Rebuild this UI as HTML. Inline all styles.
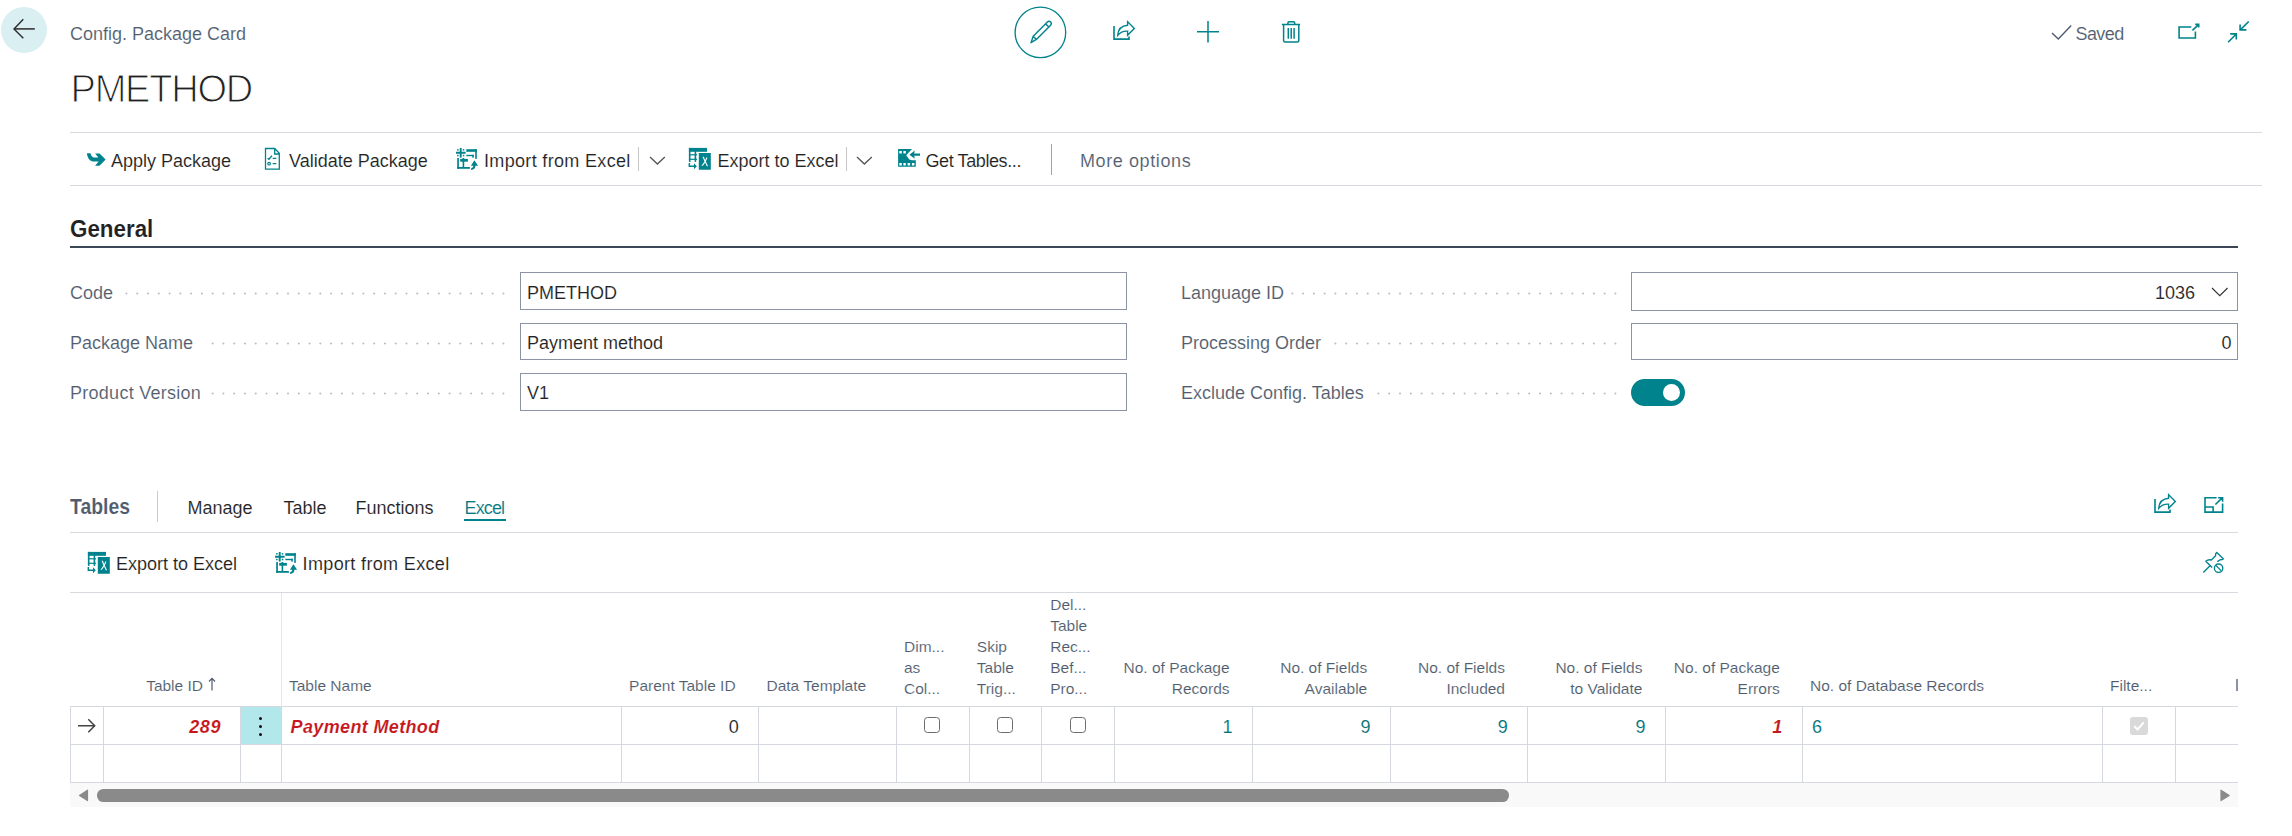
<!DOCTYPE html>
<html><head><meta charset="utf-8">
<style>
html,body{margin:0;padding:0;background:#fff;width:2292px;height:836px;overflow:hidden;}
body{position:relative;font-family:"Liberation Sans",sans-serif;}
.t{position:absolute;white-space:nowrap;line-height:1;font-size:18px;color:#212121;-webkit-text-stroke:0.12px #fff;}
.cap{color:#505c6d;}
.teal{color:#00838c;}
.red{color:#c4161c;font-weight:bold;font-style:italic;}
.hl{position:absolute;height:1px;background:#d5d8dd;}
.vl{position:absolute;width:1px;background:#d5d8dd;}
svg{position:absolute;overflow:visible;}
.box{position:absolute;border:1px solid #8a94a4;box-sizing:border-box;background:#fff;}
.dots{position:absolute;height:2px;background-image:radial-gradient(circle,#a9afb8 0.9px,transparent 1.1px);background-size:10.77px 2px;background-repeat:repeat-x;background-position:right center;}
.th{position:absolute;white-space:nowrap;line-height:21px;font-size:15.6px;color:#505c6d;}
.cb{position:absolute;width:14px;height:14px;border:1.2px solid #555;border-radius:3px;background:#fff;}
</style></head><body>

<!-- back button -->
<div style="position:absolute;left:1px;top:7px;width:46px;height:46px;border-radius:50%;background:#d9eff2;"></div>
<svg style="left:0;top:0" width="48" height="60"><path d="M14.5 28.9 H34.8" stroke="#4a4a4a" stroke-width="1.8" fill="none"/><path d="M23.3 19.3 L14 28.9 L23.3 38.3" stroke="#2a2a2a" stroke-width="1.4" fill="none"/></svg>

<div class="t cap" style="left:70px;top:24.7px;">Config. Package Card</div>
<div class="t" style="left:70.5px;top:69.8px;font-size:38px;letter-spacing:-1.2px;-webkit-text-stroke:1.1px #fff;">PMETHOD</div>



<!-- header action icons -->
<svg style="left:1014px;top:6px" width="53" height="53" viewBox="0 0 53 53"><circle cx="26.4" cy="26.4" r="25.3" stroke="#00838c" stroke-width="1.3" fill="none"/>
<path d="M17 36.7 L19.2 30.2 L33.4 16 Q35 14.4 36.6 16 Q38.2 17.6 36.6 19.2 L22.4 33.4 Z M19.2 30.2 L22.4 33.4 M31.6 17.8 L34.8 21" stroke="#00838c" stroke-width="1.4" fill="none" stroke-linejoin="round"/></svg>
<svg style="left:1107px;top:15.1px" width="30" height="28" viewBox="0 0 30 28"><g stroke="#00838c" stroke-width="1.6" fill="none"><path d="M7 11.1 V24.1 H22 V21.5"/><path d="M10.7 20.3 Q11.5 10.8 20.6 10.2 V6.6 L27.3 13.4 L20.6 20.3 V16.2 Q14.5 15.8 10.7 20.3 Z" stroke-width="1.4"/></g></svg>
<svg style="left:1196px;top:20px" width="24" height="24" viewBox="0 0 24 24"><path d="M12 1 V22.5 M1 11.8 H23" stroke="#00838c" stroke-width="1.5" fill="none"/></svg>
<svg style="left:1274px;top:14px" width="34" height="34" viewBox="0 0 34 34"><path d="M7.9 10.4 H26 M13.9 10.4 V8.9 Q13.9 7.8 15 7.8 H19.6 Q20.7 7.8 20.7 8.9 V10.4 M9.6 10.4 V26.6 Q9.6 28.1 11.1 28.1 H23.3 Q24.8 28.1 24.8 26.6 V10.4 M14.3 14 V24.8 M17.2 14 V24.8 M20.1 14 V24.8" stroke="#00838c" stroke-width="1.5" fill="none"/></svg>

<!-- saved / top right -->
<svg style="left:2050px;top:22px" width="24" height="20" viewBox="0 0 24 20"><path d="M2 11 L8.3 17 L21.2 3.5" stroke="#505c6d" stroke-width="1.4" fill="none"/></svg>
<div class="t cap" style="left:2075.5px;top:24.8px;letter-spacing:-0.6px;">Saved</div>
<svg style="left:2170px;top:14px" width="86" height="34" viewBox="0 0 86 34"><g stroke="#00838c" stroke-width="1.6" fill="none"><path d="M21.3 13 H9.1 V24 H25.4 V17.5 M22.4 16.3 L28.3 10.8 M25.2 10.4 H28.7 V13.6"/><path d="M78.7 7.5 L70.6 15.6 M70.1 10.4 V15.9 H76.4 M58.1 28.3 L66 20.2 M60.2 19.9 H66.3 V25.4"/></g></svg>

<!-- action bar -->
<div class="hl" style="left:70px;top:132px;width:2192px;background:#d6d9de;"></div>
<div class="hl" style="left:70px;top:185px;width:2192px;background:#d6d9de;"></div>
<svg style="left:82px;top:148px" width="30" height="24" viewBox="0 0 30 24"><path d="M4.9 5.2 L8.4 5.2 Q9.2 8.8 11.5 9.6 L16.4 9.6 L13.1 5.4 L17.5 5.4 L23.6 11.6 L17.5 17.8 L13.1 17.8 L16.6 13.5 L10.6 13.5 Q5.6 12.2 4.9 5.2 Z" fill="#00838c"/></svg>
<div class="t" style="left:111px;top:151.8px;">Apply Package</div>
<svg style="left:258px;top:144px" width="30" height="30" viewBox="0 0 30 30"><g stroke="#00838c" fill="none"><path d="M7.5 4.5 H16.7 L21.3 9.3 V25.1 H7.5 Z M16.7 4.5 V10 H21.3" stroke-width="1.3"/><path d="M9.6 14.3 L10.9 15.3 L14 11.6 M14.7 14.4 H18.3 M14.7 19.6 H18.3" stroke-width="1.4"/><circle cx="11.1" cy="19.7" r="1.3" stroke-width="1.2"/></g></svg>
<div class="t" style="left:289px;top:151.8px;">Validate Package</div>

<svg style="left:450px;top:142px" width="40" height="34" viewBox="0 0 40 34"><g fill="#00838c">
<rect x="6" y="9.75" width="9.6" height="2"/><rect x="9.75" y="6" width="1.9" height="9.6"/>
<rect x="7.1" y="7.1" width="1.5" height="1.5"/><rect x="12.8" y="7.1" width="1.5" height="1.5"/><rect x="7.1" y="12.8" width="1.5" height="1.5"/><rect x="12.8" y="12.8" width="1.5" height="1.5"/>
<rect x="16.3" y="7.2" width="10.5" height="2.6"/><rect x="25.2" y="7.2" width="1.6" height="9.7"/>
<rect x="16.3" y="12.8" width="7.5" height="1.4"/><rect x="22.2" y="12.8" width="1.6" height="2.8"/>
<rect x="7.2" y="16" width="1.7" height="10.8"/><rect x="7.2" y="25" width="12.7" height="1.8"/>
<rect x="10.2" y="16.9" width="7.7" height="2.8"/><rect x="12.6" y="16" width="1.6" height="9.5"/>
<path d="M24.4 18.2 L28.1 23.8 L25.4 23.8 Q25.4 27.8 21.1 28 L21.1 26.2 Q23.4 25.8 23.4 23.8 L20.9 23.8 Z"/>
</g></svg>
<div class="t " style="left:484px;top:151.76px;font-size:18px;letter-spacing:0.33px;">Import from Excel</div>
<div class="vl" style="left:638px;top:147px;height:24px;background:#c6c6c6;"></div>
<svg style="left:648.5px;top:155.8px" width="16.8" height="9.0" viewBox="-1 -1 16.8 9.0"><path d="M0 0 L7.4 7.0 L14.8 0" stroke="#555" stroke-width="1.3" fill="none"/></svg>
<svg style="left:684px;top:142px" width="40" height="34" viewBox="0 0 40 34"><g fill="#00838c">
<rect x="4.9" y="5.9" width="18.1" height="3.9"/><rect x="4.9" y="5.9" width="1.6" height="14"/>
<rect x="10.6" y="9" width="1.6" height="10.9"/><rect x="4.9" y="12.2" width="8.1" height="1.2"/><rect x="4.9" y="16.7" width="8.1" height="1.2"/>
<path d="M14.8 11 H26.8 V27.8 H14.8 Z M18.6 14.8 L20.5 19.4 L17.5 23.8 H18.9 L21.1 20.6 L22.8 24.2 H24.1 L21.8 19.4 L23.5 15.4 H22.3 L21.1 18.3 L19.9 14.8 Z" fill-rule="evenodd"/>
<path d="M4.6 21.1 H6.1 V23.5 H10 V21.3 L12.8 24.2 L10 27.2 V25 H4.6 Z"/>
</g></svg>
<div class="t " style="left:717.5px;top:151.76px;font-size:18px;">Export to Excel</div>
<div class="vl" style="left:846px;top:147px;height:24px;background:#c6c6c6;"></div>
<svg style="left:855.7px;top:155.8px" width="16.8" height="9.0" viewBox="-1 -1 16.8 9.0"><path d="M0 0 L7.4 7.0 L14.8 0" stroke="#555" stroke-width="1.3" fill="none"/></svg>
<svg style="left:892px;top:142px" width="40" height="34" viewBox="0 0 40 34"><g fill="#00838c">
<path d="M6.1 7.1 H20 L17 10.3 L14.2 13.3 L17.3 17.6 L20 18.3 H23.8 V24.8 H6.1 Z M7.3 8.9 V11.4 H9.8 V8.9 Z M11.4 8.9 V11.4 H13.8 V8.9 Z M7.3 21.1 V23.6 H9.8 V21.1 Z M11.4 21.1 V23.6 H13.8 V21.1 Z M15.6 21.1 V23.6 H18.1 V21.1 Z M19.9 21.1 V23.6 H22.4 V21.1 Z" fill-rule="evenodd"/>
<path d="M17.4 12.7 L22.8 8.6 L22.2 11.6 H28 V13.8 H22.2 L22.8 16.8 Z"/>
</g></svg>
<div class="t " style="left:925.5px;top:151.76px;font-size:18px;letter-spacing:-0.4px;">Get Tables...</div>
<div class="vl" style="left:1051px;top:144px;height:31px;background:#9aa3ae;"></div>
<div class="t cap" style="left:1080px;top:151.76px;font-size:18px;letter-spacing:0.6px;">More options</div>
<div class="t " style="left:70px;top:216.51px;font-size:24.2px;font-weight:bold;transform:scaleX(0.925);transform-origin:0 0;">General</div>
<div style="position:absolute;left:70px;top:246px;width:2168px;height:2px;background:#3b4757;"></div>
<div class="t cap" style="left:70px;top:283.56px;font-size:18px;letter-spacing:0px;">Code</div>
<svg style="left:119.00px;top:290.50px" width="391.8" height="5" fill="#b9bec6"><circle cx="384.42" cy="2.5" r="1.05"/><circle cx="373.65" cy="2.5" r="1.05"/><circle cx="362.88" cy="2.5" r="1.05"/><circle cx="352.11" cy="2.5" r="1.05"/><circle cx="341.34" cy="2.5" r="1.05"/><circle cx="330.57" cy="2.5" r="1.05"/><circle cx="319.80" cy="2.5" r="1.05"/><circle cx="309.03" cy="2.5" r="1.05"/><circle cx="298.25" cy="2.5" r="1.05"/><circle cx="287.49" cy="2.5" r="1.05"/><circle cx="276.72" cy="2.5" r="1.05"/><circle cx="265.95" cy="2.5" r="1.05"/><circle cx="255.18" cy="2.5" r="1.05"/><circle cx="244.41" cy="2.5" r="1.05"/><circle cx="233.63" cy="2.5" r="1.05"/><circle cx="222.87" cy="2.5" r="1.05"/><circle cx="212.10" cy="2.5" r="1.05"/><circle cx="201.33" cy="2.5" r="1.05"/><circle cx="190.56" cy="2.5" r="1.05"/><circle cx="179.79" cy="2.5" r="1.05"/><circle cx="169.02" cy="2.5" r="1.05"/><circle cx="158.25" cy="2.5" r="1.05"/><circle cx="147.48" cy="2.5" r="1.05"/><circle cx="136.71" cy="2.5" r="1.05"/><circle cx="125.94" cy="2.5" r="1.05"/><circle cx="115.17" cy="2.5" r="1.05"/><circle cx="104.40" cy="2.5" r="1.05"/><circle cx="93.63" cy="2.5" r="1.05"/><circle cx="82.86" cy="2.5" r="1.05"/><circle cx="72.09" cy="2.5" r="1.05"/><circle cx="61.32" cy="2.5" r="1.05"/><circle cx="50.55" cy="2.5" r="1.05"/><circle cx="39.78" cy="2.5" r="1.05"/><circle cx="29.01" cy="2.5" r="1.05"/><circle cx="18.24" cy="2.5" r="1.05"/><circle cx="7.47" cy="2.5" r="1.05"/></svg>
<div class="t cap" style="left:70px;top:334.06px;font-size:18px;letter-spacing:0px;">Package Name</div>
<svg style="left:205.00px;top:341.00px" width="305.8" height="5" fill="#b9bec6"><circle cx="298.42" cy="2.5" r="1.05"/><circle cx="287.65" cy="2.5" r="1.05"/><circle cx="276.88" cy="2.5" r="1.05"/><circle cx="266.11" cy="2.5" r="1.05"/><circle cx="255.34" cy="2.5" r="1.05"/><circle cx="244.57" cy="2.5" r="1.05"/><circle cx="233.80" cy="2.5" r="1.05"/><circle cx="223.03" cy="2.5" r="1.05"/><circle cx="212.25" cy="2.5" r="1.05"/><circle cx="201.49" cy="2.5" r="1.05"/><circle cx="190.72" cy="2.5" r="1.05"/><circle cx="179.95" cy="2.5" r="1.05"/><circle cx="169.18" cy="2.5" r="1.05"/><circle cx="158.41" cy="2.5" r="1.05"/><circle cx="147.63" cy="2.5" r="1.05"/><circle cx="136.87" cy="2.5" r="1.05"/><circle cx="126.10" cy="2.5" r="1.05"/><circle cx="115.33" cy="2.5" r="1.05"/><circle cx="104.56" cy="2.5" r="1.05"/><circle cx="93.79" cy="2.5" r="1.05"/><circle cx="83.02" cy="2.5" r="1.05"/><circle cx="72.25" cy="2.5" r="1.05"/><circle cx="61.48" cy="2.5" r="1.05"/><circle cx="50.71" cy="2.5" r="1.05"/><circle cx="39.94" cy="2.5" r="1.05"/><circle cx="29.17" cy="2.5" r="1.05"/><circle cx="18.40" cy="2.5" r="1.05"/><circle cx="7.63" cy="2.5" r="1.05"/></svg>
<div class="t cap" style="left:70px;top:384.46px;font-size:18px;letter-spacing:0.27px;">Product Version</div>
<svg style="left:207.00px;top:391.40px" width="303.8" height="5" fill="#b9bec6"><circle cx="296.42" cy="2.5" r="1.05"/><circle cx="285.65" cy="2.5" r="1.05"/><circle cx="274.88" cy="2.5" r="1.05"/><circle cx="264.11" cy="2.5" r="1.05"/><circle cx="253.34" cy="2.5" r="1.05"/><circle cx="242.57" cy="2.5" r="1.05"/><circle cx="231.80" cy="2.5" r="1.05"/><circle cx="221.03" cy="2.5" r="1.05"/><circle cx="210.25" cy="2.5" r="1.05"/><circle cx="199.49" cy="2.5" r="1.05"/><circle cx="188.72" cy="2.5" r="1.05"/><circle cx="177.95" cy="2.5" r="1.05"/><circle cx="167.18" cy="2.5" r="1.05"/><circle cx="156.41" cy="2.5" r="1.05"/><circle cx="145.63" cy="2.5" r="1.05"/><circle cx="134.87" cy="2.5" r="1.05"/><circle cx="124.10" cy="2.5" r="1.05"/><circle cx="113.33" cy="2.5" r="1.05"/><circle cx="102.56" cy="2.5" r="1.05"/><circle cx="91.79" cy="2.5" r="1.05"/><circle cx="81.02" cy="2.5" r="1.05"/><circle cx="70.25" cy="2.5" r="1.05"/><circle cx="59.48" cy="2.5" r="1.05"/><circle cx="48.71" cy="2.5" r="1.05"/><circle cx="37.94" cy="2.5" r="1.05"/><circle cx="27.17" cy="2.5" r="1.05"/><circle cx="16.40" cy="2.5" r="1.05"/><circle cx="5.63" cy="2.5" r="1.05"/></svg>
<div class="box" style="left:520px;top:272px;width:607px;height:38px;"></div>
<div class="t " style="left:527px;top:283.56px;font-size:18px;">PMETHOD</div>
<div class="box" style="left:520px;top:323px;width:607px;height:37px;"></div>
<div class="t " style="left:527px;top:334.06px;font-size:18px;">Payment method</div>
<div class="box" style="left:520px;top:373px;width:607px;height:38px;"></div>
<div class="t " style="left:527px;top:384.46px;font-size:18px;">V1</div>
<div class="t cap" style="left:1181px;top:283.56px;font-size:18px;letter-spacing:0px;">Language ID</div>
<svg style="left:1290.00px;top:290.50px" width="332.8" height="5" fill="#b9bec6"><circle cx="325.41" cy="2.5" r="1.05"/><circle cx="314.64" cy="2.5" r="1.05"/><circle cx="303.88" cy="2.5" r="1.05"/><circle cx="293.11" cy="2.5" r="1.05"/><circle cx="282.34" cy="2.5" r="1.05"/><circle cx="271.57" cy="2.5" r="1.05"/><circle cx="260.80" cy="2.5" r="1.05"/><circle cx="250.02" cy="2.5" r="1.05"/><circle cx="239.25" cy="2.5" r="1.05"/><circle cx="228.48" cy="2.5" r="1.05"/><circle cx="217.71" cy="2.5" r="1.05"/><circle cx="206.94" cy="2.5" r="1.05"/><circle cx="196.17" cy="2.5" r="1.05"/><circle cx="185.40" cy="2.5" r="1.05"/><circle cx="174.63" cy="2.5" r="1.05"/><circle cx="163.87" cy="2.5" r="1.05"/><circle cx="153.10" cy="2.5" r="1.05"/><circle cx="142.33" cy="2.5" r="1.05"/><circle cx="131.56" cy="2.5" r="1.05"/><circle cx="120.78" cy="2.5" r="1.05"/><circle cx="110.01" cy="2.5" r="1.05"/><circle cx="99.24" cy="2.5" r="1.05"/><circle cx="88.47" cy="2.5" r="1.05"/><circle cx="77.70" cy="2.5" r="1.05"/><circle cx="66.93" cy="2.5" r="1.05"/><circle cx="56.16" cy="2.5" r="1.05"/><circle cx="45.39" cy="2.5" r="1.05"/><circle cx="34.62" cy="2.5" r="1.05"/><circle cx="23.86" cy="2.5" r="1.05"/><circle cx="13.09" cy="2.5" r="1.05"/><circle cx="2.32" cy="2.5" r="1.05"/></svg>
<div class="t cap" style="left:1181px;top:334.06px;font-size:18px;letter-spacing:0px;">Processing Order</div>
<svg style="left:1327.00px;top:341.00px" width="295.8" height="5" fill="#b9bec6"><circle cx="288.41" cy="2.5" r="1.05"/><circle cx="277.64" cy="2.5" r="1.05"/><circle cx="266.88" cy="2.5" r="1.05"/><circle cx="256.11" cy="2.5" r="1.05"/><circle cx="245.34" cy="2.5" r="1.05"/><circle cx="234.57" cy="2.5" r="1.05"/><circle cx="223.80" cy="2.5" r="1.05"/><circle cx="213.02" cy="2.5" r="1.05"/><circle cx="202.25" cy="2.5" r="1.05"/><circle cx="191.48" cy="2.5" r="1.05"/><circle cx="180.71" cy="2.5" r="1.05"/><circle cx="169.94" cy="2.5" r="1.05"/><circle cx="159.17" cy="2.5" r="1.05"/><circle cx="148.40" cy="2.5" r="1.05"/><circle cx="137.63" cy="2.5" r="1.05"/><circle cx="126.87" cy="2.5" r="1.05"/><circle cx="116.10" cy="2.5" r="1.05"/><circle cx="105.33" cy="2.5" r="1.05"/><circle cx="94.56" cy="2.5" r="1.05"/><circle cx="83.78" cy="2.5" r="1.05"/><circle cx="73.01" cy="2.5" r="1.05"/><circle cx="62.24" cy="2.5" r="1.05"/><circle cx="51.47" cy="2.5" r="1.05"/><circle cx="40.70" cy="2.5" r="1.05"/><circle cx="29.93" cy="2.5" r="1.05"/><circle cx="19.16" cy="2.5" r="1.05"/><circle cx="8.39" cy="2.5" r="1.05"/></svg>
<div class="t cap" style="left:1181px;top:384.46px;font-size:18px;letter-spacing:0px;">Exclude Config. Tables</div>
<svg style="left:1370.00px;top:391.40px" width="252.8" height="5" fill="#b9bec6"><circle cx="245.41" cy="2.5" r="1.05"/><circle cx="234.64" cy="2.5" r="1.05"/><circle cx="223.88" cy="2.5" r="1.05"/><circle cx="213.11" cy="2.5" r="1.05"/><circle cx="202.34" cy="2.5" r="1.05"/><circle cx="191.57" cy="2.5" r="1.05"/><circle cx="180.80" cy="2.5" r="1.05"/><circle cx="170.02" cy="2.5" r="1.05"/><circle cx="159.25" cy="2.5" r="1.05"/><circle cx="148.48" cy="2.5" r="1.05"/><circle cx="137.71" cy="2.5" r="1.05"/><circle cx="126.94" cy="2.5" r="1.05"/><circle cx="116.17" cy="2.5" r="1.05"/><circle cx="105.40" cy="2.5" r="1.05"/><circle cx="94.63" cy="2.5" r="1.05"/><circle cx="83.87" cy="2.5" r="1.05"/><circle cx="73.10" cy="2.5" r="1.05"/><circle cx="62.33" cy="2.5" r="1.05"/><circle cx="51.56" cy="2.5" r="1.05"/><circle cx="40.78" cy="2.5" r="1.05"/><circle cx="30.01" cy="2.5" r="1.05"/><circle cx="19.24" cy="2.5" r="1.05"/><circle cx="8.47" cy="2.5" r="1.05"/></svg>
<div class="box" style="left:1631px;top:272px;width:607px;height:39px;"></div>
<div class="t " style="right:97px;top:283.56px;font-size:18px;">1036</div>
<svg style="left:2210.8px;top:286.6px" width="17.6" height="9.6" viewBox="-1 -1 17.6 9.6"><path d="M0 0 L7.8 7.6 L15.6 0" stroke="#333" stroke-width="1.15" fill="none"/></svg>
<div class="box" style="left:1631px;top:323px;width:607px;height:37px;"></div>
<div class="t " style="right:60.5px;top:334.06px;font-size:18px;">0</div>
<div style="position:absolute;left:1631px;top:379px;width:54px;height:27px;border-radius:13.5px;background:#00838c;"></div>
<div style="position:absolute;left:1662.8px;top:383.8px;width:17.2px;height:17.2px;border-radius:50%;background:#fff;"></div>
<div class="t cap" style="left:70px;top:495.40px;font-size:22.8px;font-weight:bold;transform:scaleX(0.85);transform-origin:0 0;">Tables</div>
<div class="vl" style="left:157px;top:491px;height:31px;background:#c8ccd2;"></div>
<div class="t " style="left:187.5px;top:498.76px;font-size:18px;">Manage</div>
<div class="t " style="left:283.5px;top:498.76px;font-size:18px;">Table</div>
<div class="t " style="left:355.4px;top:498.76px;font-size:18px;">Functions</div>
<div class="t teal" style="left:464.6px;top:498.76px;font-size:18px;letter-spacing:-0.9px;color:#007a82;">Excel</div>
<div style="position:absolute;left:464px;top:519px;width:42px;height:2px;background:#00838c;"></div>
<div class="hl" style="left:70px;top:532px;width:2168px;background:#d6d9de;"></div>
<svg style="left:2148px;top:488px" width="84" height="32" viewBox="0 0 84 32"><g stroke="#00838c" stroke-width="1.6" fill="none"><path d="M7 11.1 V24.1 H22 V21.5"/><path d="M10.7 20.3 Q11.5 10.8 20.6 10.2 V6.6 L27.3 13.4 L20.6 20.3 V16.2 Q14.5 15.8 10.7 20.3 Z" stroke-width="1.4" stroke-linejoin="miter"/><path d="M68.6 9.7 H57 V24.1 H74.6 V15.5 M70.1 9.7 H74.6 V13.8 M67.4 16.5 L74.2 9.9 M57 19 H65.1 V24.1"/></g></svg>
<svg style="left:83px;top:546px" width="40" height="34" viewBox="0 0 40 34"><g fill="#00838c">
<rect x="4.9" y="5.9" width="18.1" height="3.9"/><rect x="4.9" y="5.9" width="1.6" height="14"/>
<rect x="10.6" y="9" width="1.6" height="10.9"/><rect x="4.9" y="12.2" width="8.1" height="1.2"/><rect x="4.9" y="16.7" width="8.1" height="1.2"/>
<path d="M14.8 11 H26.8 V27.8 H14.8 Z M18.6 14.8 L20.5 19.4 L17.5 23.8 H18.9 L21.1 20.6 L22.8 24.2 H24.1 L21.8 19.4 L23.5 15.4 H22.3 L21.1 18.3 L19.9 14.8 Z" fill-rule="evenodd"/>
<path d="M4.6 21.1 H6.1 V23.5 H10 V21.3 L12.8 24.2 L10 27.2 V25 H4.6 Z"/>
</g></svg>
<div class="t " style="left:116px;top:555.06px;font-size:18px;">Export to Excel</div>
<svg style="left:269px;top:546px" width="40" height="34" viewBox="0 0 40 34"><g fill="#00838c">
<rect x="6" y="9.75" width="9.6" height="2"/><rect x="9.75" y="6" width="1.9" height="9.6"/>
<rect x="7.1" y="7.1" width="1.5" height="1.5"/><rect x="12.8" y="7.1" width="1.5" height="1.5"/><rect x="7.1" y="12.8" width="1.5" height="1.5"/><rect x="12.8" y="12.8" width="1.5" height="1.5"/>
<rect x="16.3" y="7.2" width="10.5" height="2.6"/><rect x="25.2" y="7.2" width="1.6" height="9.7"/>
<rect x="16.3" y="12.8" width="7.5" height="1.4"/><rect x="22.2" y="12.8" width="1.6" height="2.8"/>
<rect x="7.2" y="16" width="1.7" height="10.8"/><rect x="7.2" y="25" width="12.7" height="1.8"/>
<rect x="10.2" y="16.9" width="7.7" height="2.8"/><rect x="12.6" y="16" width="1.6" height="9.5"/>
<path d="M24.4 18.2 L28.1 23.8 L25.4 23.8 Q25.4 27.8 21.1 28 L21.1 26.2 Q23.4 25.8 23.4 23.8 L20.9 23.8 Z"/>
</g></svg>
<div class="t " style="left:302.6px;top:555.06px;font-size:18px;letter-spacing:0.35px;">Import from Excel</div>
<svg style="left:2196px;top:546px" width="34" height="32" viewBox="0 0 34 32"><g stroke="#00838c" stroke-width="1.35" fill="none" stroke-linejoin="round"><path d="M7.3 26.4 L14 19.8"/><path d="M16.1 21.4 L9.8 15.3 Q12.2 13.2 15.3 14 L19.6 9.8 Q19.3 7.2 20.8 6.4 L27.5 12.9 Q26.6 14 24.2 13.7 L21.3 15.6"/><circle cx="22.6" cy="22.2" r="4.2"/><path d="M19.9 19.4 L25.3 24.9"/></g></svg>
<div class="hl" style="left:70px;top:592px;width:2168px;background:#d6d9de;"></div>
<div class="vl" style="left:280.5px;top:593px;height:113px;background:#e4e6ea;"></div>
<div class="t cap" style="right:2089.00px;top:677.88px;font-size:15.5px;">Table ID</div>
<svg style="left:207px;top:676px" width="10" height="16" viewBox="0 0 10 16"><path d="M5 14.5 V2.5 M2 5.5 L5 2.3 L8 5.5" stroke="#505c6d" stroke-width="1.2" fill="none"/></svg>
<div class="t cap" style="left:289px;top:677.88px;font-size:15.5px;">Table Name</div>
<div class="t cap" style="right:1556.40px;top:677.88px;font-size:15.5px;">Parent Table ID</div>
<div class="t cap" style="left:766.5px;top:677.88px;font-size:15.5px;">Data Template</div>
<div class="t cap" style="left:904px;top:639.28px;font-size:15.5px;">Dim...</div>
<div class="t cap" style="left:904px;top:660.18px;font-size:15.5px;">as</div>
<div class="t cap" style="left:904px;top:681.08px;font-size:15.5px;">Col...</div>
<div class="t cap" style="left:976.8px;top:639.28px;font-size:15.5px;">Skip</div>
<div class="t cap" style="left:976.8px;top:660.18px;font-size:15.5px;">Table</div>
<div class="t cap" style="left:976.8px;top:681.08px;font-size:15.5px;">Trig...</div>
<div class="t cap" style="left:1050.2px;top:597.48px;font-size:15.5px;">Del...</div>
<div class="t cap" style="left:1050.2px;top:618.38px;font-size:15.5px;">Table</div>
<div class="t cap" style="left:1050.2px;top:639.28px;font-size:15.5px;">Rec...</div>
<div class="t cap" style="left:1050.2px;top:660.18px;font-size:15.5px;">Bef...</div>
<div class="t cap" style="left:1050.2px;top:681.08px;font-size:15.5px;">Pro...</div>
<div class="t cap" style="right:1062.50px;top:660.18px;font-size:15.5px;">No. of Package</div>
<div class="t cap" style="right:1062.50px;top:681.08px;font-size:15.5px;">Records</div>
<div class="t cap" style="right:924.80px;top:660.18px;font-size:15.5px;">No. of Fields</div>
<div class="t cap" style="right:924.80px;top:681.08px;font-size:15.5px;">Available</div>
<div class="t cap" style="right:787.00px;top:660.18px;font-size:15.5px;">No. of Fields</div>
<div class="t cap" style="right:787.00px;top:681.08px;font-size:15.5px;">Included</div>
<div class="t cap" style="right:649.60px;top:660.18px;font-size:15.5px;">No. of Fields</div>
<div class="t cap" style="right:649.60px;top:681.08px;font-size:15.5px;">to Validate</div>
<div class="t cap" style="right:512.20px;top:660.18px;font-size:15.5px;">No. of Package</div>
<div class="t cap" style="right:512.20px;top:681.08px;font-size:15.5px;">Errors</div>
<div class="t cap" style="left:1810px;top:677.88px;font-size:15.5px;">No. of Database Records</div>
<div class="t cap" style="left:2110px;top:677.88px;font-size:15.5px;">Filte...</div>
<div style="position:absolute;left:2236px;top:679px;width:2px;height:12px;background:#8a94a4;"></div>
<div class="hl" style="left:70px;top:706px;width:2168px;background:#d5d8de;"></div>
<div class="hl" style="left:70px;top:744px;width:2168px;background:#d5d8de;"></div>
<div class="hl" style="left:70px;top:782px;width:2168px;background:#d5d8de;"></div>
<div class="vl" style="left:70px;top:706px;height:77px;background:#d5d8de;"></div>
<div class="vl" style="left:103px;top:706px;height:77px;background:#d5d8de;"></div>
<div class="vl" style="left:240px;top:706px;height:77px;background:#d5d8de;"></div>
<div class="vl" style="left:281px;top:706px;height:77px;background:#d5d8de;"></div>
<div class="vl" style="left:621px;top:706px;height:77px;background:#d5d8de;"></div>
<div class="vl" style="left:758px;top:706px;height:77px;background:#d5d8de;"></div>
<div class="vl" style="left:896px;top:706px;height:77px;background:#d5d8de;"></div>
<div class="vl" style="left:969px;top:706px;height:77px;background:#d5d8de;"></div>
<div class="vl" style="left:1041px;top:706px;height:77px;background:#d5d8de;"></div>
<div class="vl" style="left:1114px;top:706px;height:77px;background:#d5d8de;"></div>
<div class="vl" style="left:1252px;top:706px;height:77px;background:#d5d8de;"></div>
<div class="vl" style="left:1390px;top:706px;height:77px;background:#d5d8de;"></div>
<div class="vl" style="left:1527px;top:706px;height:77px;background:#d5d8de;"></div>
<div class="vl" style="left:1665px;top:706px;height:77px;background:#d5d8de;"></div>
<div class="vl" style="left:1802px;top:706px;height:77px;background:#d5d8de;"></div>
<div class="vl" style="left:2102px;top:706px;height:77px;background:#d5d8de;"></div>
<div class="vl" style="left:2175px;top:706px;height:77px;background:#d5d8de;"></div>
<div style="position:absolute;left:241px;top:707px;width:40px;height:37px;background:#b2e8ec;"></div>
<div style="position:absolute;left:259.4px;top:716.9px;width:3px;height:3px;border-radius:50%;background:#111;"></div>
<div style="position:absolute;left:259.4px;top:725.3px;width:3px;height:3px;border-radius:50%;background:#111;"></div>
<div style="position:absolute;left:259.4px;top:733.4px;width:3px;height:3px;border-radius:50%;background:#111;"></div>
<svg style="left:76px;top:717px" width="22" height="18" viewBox="0 0 22 18"><path d="M2 8.7 H18.5 M12.3 2.3 L18.7 8.7 L12.3 15.3" stroke="#444" stroke-width="1.5" fill="none"/></svg>
<div class="t red" style="right:2071.00px;top:717.56px;font-size:18px;letter-spacing:0.6px;">289</div>
<div class="t red" style="left:290.6px;top:717.56px;font-size:18px;letter-spacing:0.35px;">Payment Method</div>
<div class="t " style="right:1553.30px;top:717.56px;font-size:18px;">0</div>
<div style="position:absolute;left:924.3px;top:717.2px;width:16px;height:16px;box-sizing:border-box;border:1.5px solid #6c6c6c;border-radius:3.5px;"></div>
<div style="position:absolute;left:997.2px;top:717.2px;width:16px;height:16px;box-sizing:border-box;border:1.5px solid #6c6c6c;border-radius:3.5px;"></div>
<div style="position:absolute;left:1070.3px;top:717.2px;width:16px;height:16px;box-sizing:border-box;border:1.5px solid #6c6c6c;border-radius:3.5px;"></div>
<div class="t teal" style="right:1059.60px;top:717.56px;font-size:18px;color:#006f76;">1</div>
<div class="t teal" style="right:921.40px;top:717.56px;font-size:18px;color:#006f76;">9</div>
<div class="t teal" style="right:784.30px;top:717.56px;font-size:18px;color:#006f76;">9</div>
<div class="t teal" style="right:646.40px;top:717.56px;font-size:18px;color:#006f76;">9</div>
<div class="t red" style="right:509.80px;top:717.56px;font-size:18px;">1</div>
<div class="t teal" style="left:1812px;top:717.56px;font-size:18px;color:#006f76;">6</div>
<div style="position:absolute;left:2130px;top:717px;width:17.5px;height:17.5px;border-radius:3px;background:#d9d9d9;"></div>
<svg style="left:2130px;top:717px" width="18" height="18" viewBox="0 0 18 18"><path d="M4.3 9.3 L7.5 12.5 L13.8 5.3" stroke="#fff" stroke-width="2" fill="none"/></svg>
<div style="position:absolute;left:70px;top:783px;width:2168px;height:24px;background:#f9f9f9;"></div>
<div style="position:absolute;left:97px;top:789px;width:1412px;height:12.8px;border-radius:6.4px;background:#8a8a8a;"></div>
<svg style="left:78px;top:789px" width="12" height="13" viewBox="0 0 12 13"><path d="M1.5 6.4 L9.5 1.2 V11.6 Z" fill="#8a8a8a" stroke="#8a8a8a" stroke-width="1.2" stroke-linejoin="round"/></svg>
<svg style="left:2219px;top:789px" width="12" height="13" viewBox="0 0 12 13"><path d="M10.2 6.4 L2 1.2 V11.6 Z" fill="#8a8a8a" stroke="#8a8a8a" stroke-width="1.2" stroke-linejoin="round"/></svg>
</body></html>
